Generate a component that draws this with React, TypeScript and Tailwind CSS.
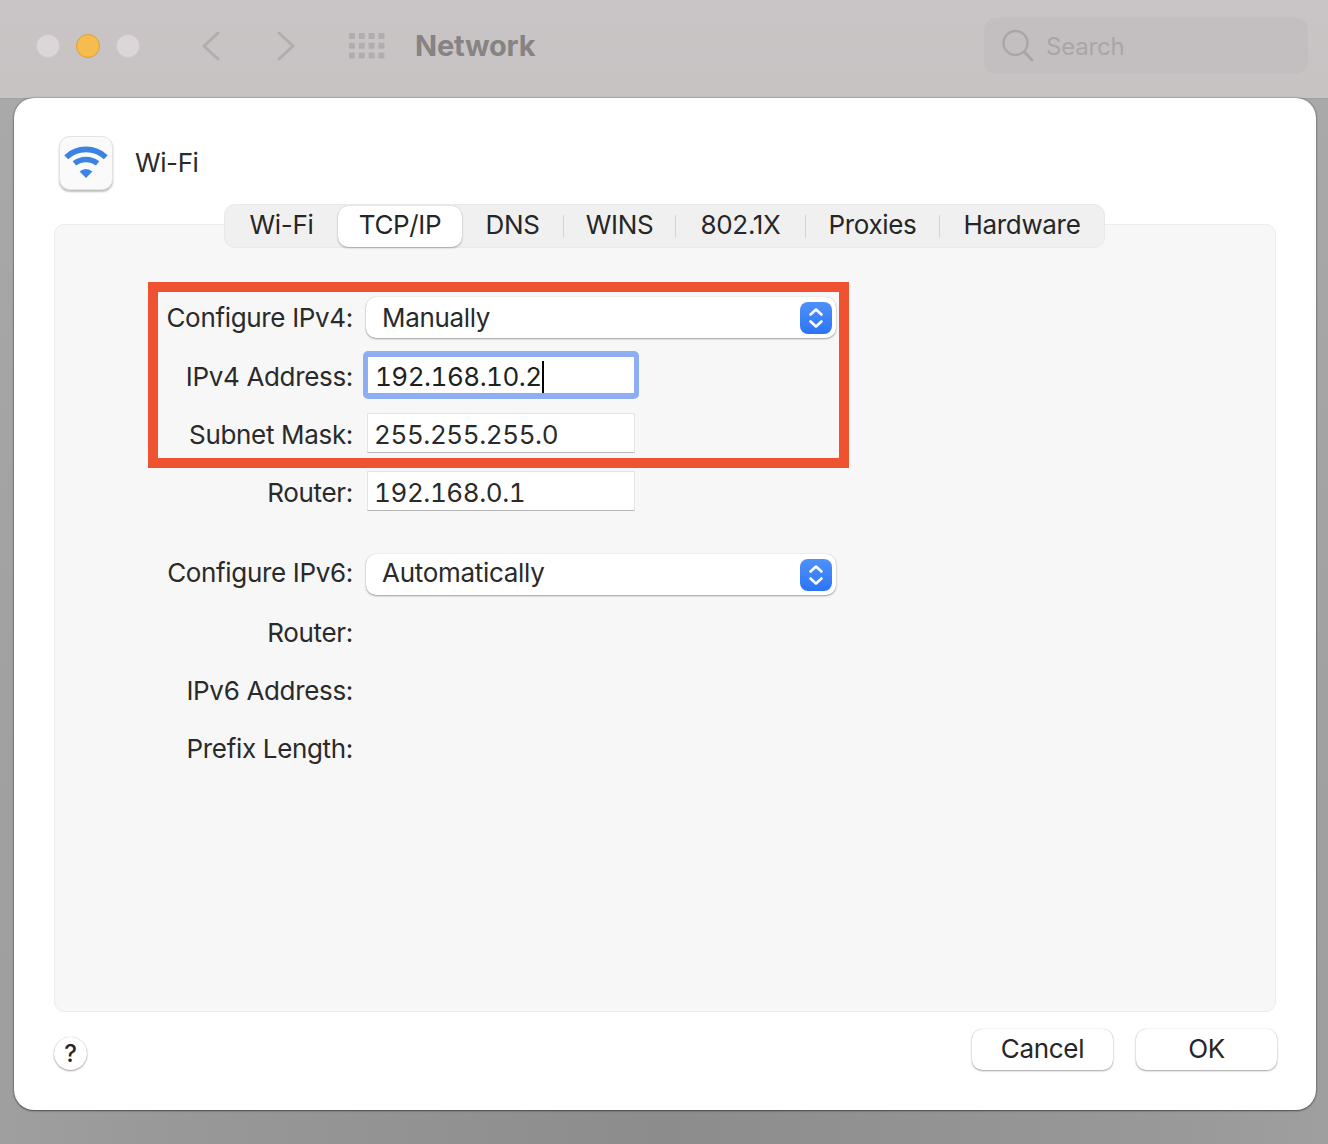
const font = { fontFamily: 'Inter, "Liberation Sans", sans-serif' };

function Stepper() {
  return (
    <div className="w-[32px] h-[32px] rounded-[8px] bg-gradient-to-b from-[#4f91f9] to-[#2b74f6] flex items-center justify-center">
      <svg width="32" height="32" viewBox="0 0 32 32" fill="none" stroke="#ffffff" strokeWidth="2.6" strokeLinecap="round" strokeLinejoin="round">
        <path d="M10.5 12.5 L16 7.5 L21.5 12.5" />
        <path d="M10.5 19.5 L16 24.5 L21.5 19.5" />
      </svg>
    </div>
  );
}

function Label({ children, low }: { children: string; low?: boolean }) {
  return (
    <div className={low ? 'w-[195px] shrink-0 text-right text-[26px] leading-[32px] tracking-[-0.33px] text-[#2a2a2a] whitespace-nowrap pt-[3px]' : 'w-[195px] shrink-0 text-right text-[26px] leading-[32px] tracking-[-0.33px] text-[#2a2a2a] whitespace-nowrap'}>
      {children}
    </div>
  );
}

function Select({ value, label, high }: { value: string; label: string; high?: boolean }) {
  return (
    <div className="flex items-center">
      <div className={high ? 'pb-[3px]' : ''}><Label>{label}</Label></div>
      <div className="ml-[13px] w-[470px] h-[41px] rounded-[10px] bg-white shadow-[0_1px_2px_rgba(0,0,0,0.35),0_0_1px_rgba(0,0,0,0.2)] flex items-center justify-between pl-[16px] pr-[4px]">
        <span className={high ? 'text-[26px] leading-[32px] tracking-[-0.3px] text-[#2a2a2a] pb-[3px]' : 'text-[26px] leading-[32px] tracking-[-0.33px] text-[#2a2a2a]'}>{value}</span>
        <Stepper />
      </div>
    </div>
  );
}

function Field({ label, value }: { label: string; value: string }) {
  return (
    <div className="flex items-center">
      <Label low>{label}</Label>
      <div className="ml-[14px] w-[268px] h-[40px] bg-white border border-[#e4e4e4] border-b-[#b9b9b9] flex items-center pl-[6px] pt-[3px] text-[26px] leading-[32px] tabular-nums tracking-[-0.42px] text-[#2a2a2a]">
        {value}
      </div>
    </div>
  );
}

function TextRow({ children }: { children: string }) {
  return (
    <div className="flex items-center h-[32px]">
      <Label>{children}</Label>
    </div>
  );
}

const tabs = [
  { t: 'Wi-Fi', w: 'w-[113px]' },
  { t: 'TCP/IP', w: 'w-[124px]' },
  { t: 'DNS', w: 'w-[101px]' },
  { t: 'WINS', w: 'w-[111px]' },
  { t: '802.1X', w: 'w-[129px]' },
  { t: 'Proxies', w: 'w-[133px]' },
  { t: 'Hardware', w: 'w-[164px]' },
];

function Tabs() {
  return (
    <div className="relative z-10 flex justify-center">
      <div className="-ml-px flex items-center h-[44px] rounded-[11px] bg-[#f0f0f0] border border-[#e9e9e9]">
        {tabs.map(({ t, w }, i) => (
          <div key={t} className="flex items-center">
            <div className={`${w} h-[41px] flex items-center justify-center pb-[3px] text-[26px] tracking-[-0.33px] text-[#262626] ${i === 1 ? 'rounded-[10px] bg-white shadow-[0_1px_2px_rgba(0,0,0,0.3),0_0_1px_rgba(0,0,0,0.2)]' : ''}`}>{t}</div>
            {i >= 2 && i < 6 && <div className="w-px h-[23px] bg-[#d4d4d4]" />}
          </div>
        ))}
      </div>
    </div>
  );
}

function WifiTile() {
  return (
    <div className="w-[54px] h-[54px] rounded-[11px] bg-[#fafafa] border border-[#e3e3e3] shadow-[0_2px_2px_rgba(0,0,0,0.25)]">
      <svg width="52" height="52" viewBox="1 1 52 52" fill="none" stroke="#3b82e4">
        <path d="M7.2 21.2 A29 29 0 0 1 46.8 21.2" strokeWidth="5.6" />
        <path d="M15.4 27.4 A19 19 0 0 1 38.6 27.4" strokeWidth="5.4" />
        <path d="M27 42 L20.6 35.6 A9.2 9.2 0 0 1 33.4 35.6 Z" fill="#3b82e4" stroke="none" />
      </svg>
    </div>
  );
}

export default function App() {
  return (
    <div style={font} className="w-[1328px] h-[1144px] overflow-hidden flex flex-col bg-[radial-gradient(ellipse_at_50%_100%,#8c8c8c_0%,#999999_55%,#ababab_100%)]">
      {/* Toolbar */}
      <div className="h-[99px] shrink-0 bg-gradient-to-b from-[#c9c5c6] to-[#c7c3c3] flex items-center pl-[36px] pr-[20px] pb-[7px] border-b border-[#a3a1a1]">
        <div className="flex gap-[16px]">
          <div className="w-[24px] h-[24px] rounded-full bg-[#dcd6d8] border border-[#cfc9cb]" />
          <div className="w-[24px] h-[24px] rounded-full bg-[#f6bd4e] border border-[#dca03a]" />
          <div className="w-[24px] h-[24px] rounded-full bg-[#dcd6d8] border border-[#cfc9cb]" />
        </div>
        <svg className="ml-[61px]" width="20" height="30" viewBox="0 0 20 30" fill="none" stroke="#b0adae" strokeWidth="3" strokeLinecap="round" strokeLinejoin="round">
          <path d="M17 2 L3 15 L17 28" />
        </svg>
        <svg className="ml-[55px]" width="20" height="30" viewBox="0 0 20 30" fill="none" stroke="#b0adae" strokeWidth="3" strokeLinecap="round" strokeLinejoin="round">
          <path d="M3 2 L17 15 L3 28" />
        </svg>
        <svg className="ml-[53px]" width="36" height="26" viewBox="0 0 36 26" fill="#b0adae">
          {[0, 9.8, 19.6].map((y) =>
            [0, 9.8, 19.6, 29.4].map((x) => <rect key={`${x}-${y}`} x={x} y={y} width="6" height="6" rx="0.8" />)
          )}
        </svg>
        <div className="ml-[30px] text-[29px] leading-[36px] font-bold tracking-[-0.2px] text-[#858384]">Network</div>
        <div className="ml-auto w-[324px] h-[56px] rounded-[12px] bg-[#c3bfc0] flex items-center pl-[18px]">
          <svg width="32" height="34" viewBox="0 0 32 34" fill="none" stroke="#a9a6a7" strokeWidth="2.4" strokeLinecap="round">
            <circle cx="13.5" cy="14" r="12" />
            <path d="M22.5 23 L30 31" strokeWidth="3" />
          </svg>
          <span className="ml-[12px] pt-[2px] text-[24px] leading-[32px] tracking-[-0.2px] text-[#a9a6a7]">Search</span>
        </div>
      </div>

      {/* Sheet */}
      <div className="-mt-px relative mx-[14px] w-[1302px] h-[1012px] rounded-[20px] bg-white shadow-[0_0_2px_rgba(0,0,0,0.5),0_1px_2px_rgba(0,0,0,0.4)] px-[40px] flex flex-col">
        <div className="flex items-center pt-[24px] pl-[5px] h-[106px]">
          <WifiTile />
          <div className="ml-[22px] text-[26px] leading-[32px] tracking-[-0.4px] text-[#2a2a2a]">Wi-Fi</div>
        </div>
        <Tabs />
        <div className="-mt-[24px] h-[788px] rounded-[10px] bg-[#f7f7f7] border border-[#ececec] pt-[57px] pl-[93px]">
          <div className="w-[701px] h-[186px] border-[10px] border-[#ee5230] pt-[5px] flex flex-col">
            <Select value="Manually" label="Configure IPv4:" />
            <div className="flex items-center mt-[13px]">
              <Label low>IPv4 Address:</Label>
              <div className="ml-[10px] w-[276px] h-[48px] rounded-[5px] bg-white border-x-[5px] border-y-[6px] border-[#8daef0] flex items-center pl-[7px] pt-[3px] text-[26px] leading-[32px] tabular-nums tracking-[-0.5px] text-[#1f1f1f]">
                192.168.10.2<span className="w-[2px] h-[32px] bg-black" />
              </div>
            </div>
            <div className="mt-[14px]">
              <Field label="Subnet Mask:" value="255.255.255.0" />
            </div>
          </div>
          <div className="w-[701px] pl-[10px] mt-[3px] flex flex-col">
            <Field label="Router:" value="192.168.0.1" />
            <div className="mt-[43px]"><Select value="Automatically" label="Configure IPv6:" high /></div>
            <div className="mt-[22px]"><TextRow>Router:</TextRow></div>
            <div className="mt-[26px]"><TextRow>IPv6 Address:</TextRow></div>
            <div className="mt-[26px]"><TextRow>Prefix Length:</TextRow></div>
          </div>
        </div>
        <div className="flex items-start justify-between mt-[17px]">
          <div className="mt-[8px] w-[33px] h-[33px] rounded-full bg-white shadow-[0_1px_2px_rgba(0,0,0,0.35),0_0_1px_rgba(0,0,0,0.25)] flex items-center justify-center text-[24px] font-medium text-[#262626]">?</div>
          <div className="flex gap-[23px] -mr-px">
            <div className="w-[141px] h-[41px] rounded-[10px] bg-white shadow-[0_1px_2px_rgba(0,0,0,0.35),0_0_1px_rgba(0,0,0,0.25)] flex items-center justify-center pb-[3px] text-[26px] tracking-[-0.33px] text-[#262626]">Cancel</div>
            <div className="w-[141px] h-[41px] rounded-[10px] bg-white shadow-[0_1px_2px_rgba(0,0,0,0.35),0_0_1px_rgba(0,0,0,0.25)] flex items-center justify-center pb-[3px] text-[26px] tracking-[-0.33px] text-[#262626]">OK</div>
          </div>
        </div>
      </div>
    </div>
  );
}
